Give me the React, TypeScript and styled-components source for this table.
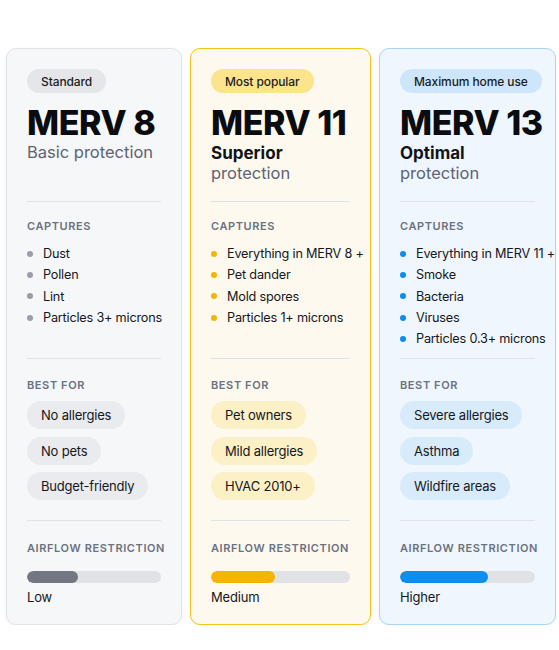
import * as React from "react";
import styled, { createGlobalStyle } from "styled-components";

type Tone = "gray" | "yellow" | "blue";

const palette: Record<
  Tone,
  { bg: string; border: string; badge: string; chip: string; dot: string; fill: string; borderWidth: string }
> = {
  gray: {
    bg: "#f6f7f9",
    border: "#e1e3e8",
    badge: "#e5e6ea",
    chip: "#eaebee",
    dot: "#9a9ea8",
    fill: "#737782",
    borderWidth: "1px",
  },
  yellow: {
    bg: "#fdf9ef",
    border: "#f5c21c",
    badge: "#fce48c",
    chip: "#fcf0c6",
    dot: "#f4b400",
    fill: "#f4b400",
    borderWidth: "1.5px",
  },
  blue: {
    bg: "#eff6fd",
    border: "#a9d5f8",
    badge: "#cde6fb",
    chip: "#d8ebfb",
    dot: "#0b8ef0",
    fill: "#0a8ff0",
    borderWidth: "1.5px",
  },
};

const GlobalStyle = createGlobalStyle`
  body {
    margin: 0;
    background: #ffffff;
    font-family: Inter, "Noto Sans", sans-serif;
    color: #111318;
  }
`;

const Grid = styled.div`
  display: grid;
  grid-template-columns: 176px 181px 177px;
  column-gap: 8px;
  padding: 48px 0 0 6px;
`;

const Card = styled.div<{ $tone: Tone }>`
  display: grid;
  grid-row: span 4;
  grid-template-rows: subgrid;
  grid-template-columns: minmax(0, 1fr);
  row-gap: 0;
  min-width: 0;
  background: ${(p) => palette[p.$tone].bg};
  border: ${(p) => palette[p.$tone].borderWidth} solid ${(p) => palette[p.$tone].border};
  border-radius: 10px;
  box-shadow: 0 1px 4px rgba(20, 30, 50, 0.05);
`;

const Header = styled.div`
  padding: 20px 20px 18px;
  display: flex;
  flex-direction: column;
  align-items: flex-start;
`;

const Badge = styled.span<{ $tone: Tone }>`
  display: inline-flex;
  align-items: center;
  height: 24px;
  padding: 0 14px;
  border-radius: 12px;
  background: ${(p) => palette[p.$tone].badge};
  font-size: 12px;
  font-weight: 500;
  letter-spacing: -0.1px;
  color: #1b1d22;
  white-space: nowrap;
`;

const Title = styled.h2`
  margin: 11px 0 0;
  font-size: 34px;
  line-height: 38px;
  font-weight: 800;
  letter-spacing: -0.4px;
  white-space: nowrap;
  color: #0b0c0f;
`;

const Strong = styled.div`
  font-size: 17px;
  line-height: 20px;
  font-weight: 700;
  color: #111318;
  margin-top: 1px;
`;

const Sub = styled.div`
  font-size: 16.5px;
  line-height: 20px;
  font-weight: 400;
  color: #5d6474;
  white-space: nowrap;
`;

const Section = styled.section<{ $top: number; $bottom: number }>`
  min-width: 0;
  margin: 0 20px;
  border-top: 1px solid #dfe2e8;
  padding: ${(p) => p.$top}px 0 ${(p) => p.$bottom}px;
  display: flex;
  flex-direction: column;
  align-items: flex-start;
`;

const Label = styled.div`
  font-size: 11px;
  line-height: 14px;
  font-weight: 600;
  letter-spacing: 0.055em;
  text-transform: uppercase;
  white-space: nowrap;
  color: #6b7280;
`;

const List = styled.ul`
  list-style: none;
  margin: 10px 0 0;
  padding: 0;
`;

const Item = styled.li<{ $tone: Tone }>`
  display: flex;
  align-items: center;
  gap: 10px;
  font-size: 12.7px;
  line-height: 21.3px;
  letter-spacing: -0.2px;
  color: #15171c;
  white-space: nowrap;

  &::before {
    content: "";
    width: 6px;
    height: 6px;
    border-radius: 50%;
    flex: none;
    background: ${(p) => palette[p.$tone].dot};
  }
`;

const Chips = styled.div`
  display: flex;
  flex-direction: column;
  align-items: flex-start;
  gap: 7.5px;
  margin-top: 9px;
`;

const Chip = styled.span<{ $tone: Tone }>`
  display: inline-flex;
  align-items: center;
  height: 28px;
  padding: 0 14px;
  border-radius: 14px;
  background: ${(p) => palette[p.$tone].chip};
  font-size: 13px;
  letter-spacing: -0.2px;
  color: #15171c;
  white-space: nowrap;
`;

const Track = styled.div`
  align-self: stretch;
  height: 12px;
  margin-top: 16px;
  border-radius: 6px;
  background: #e1e2e6;
  overflow: hidden;
`;

const Fill = styled.div<{ $tone: Tone }>`
  height: 100%;
  border-radius: 6px;
  background: ${(p) => palette[p.$tone].fill};
`;

const Level = styled.div`
  margin-top: 5px;
  font-size: 13px;
  line-height: 18px;
  letter-spacing: -0.15px;
  color: #15171c;
`;

type Plan = {
  tone: Tone;
  badge: string;
  title: string;
  strong?: string;
  sub: string;
  captures: string[];
  bestFor: string[];
  airflow: number;
  level: string;
};

const plans: Plan[] = [
  {
    tone: "gray",
    badge: "Standard",
    title: "MERV 8",
    sub: "Basic protection",
    captures: ["Dust", "Pollen", "Lint", "Particles 3+ microns"],
    bestFor: ["No allergies", "No pets", "Budget-friendly"],
    airflow: 38,
    level: "Low",
  },
  {
    tone: "yellow",
    badge: "Most popular",
    title: "MERV 11",
    strong: "Superior",
    sub: "protection",
    captures: ["Everything in MERV 8 +", "Pet dander", "Mold spores", "Particles 1+ microns"],
    bestFor: ["Pet owners", "Mild allergies", "HVAC 2010+"],
    airflow: 46,
    level: "Medium",
  },
  {
    tone: "blue",
    badge: "Maximum home use",
    title: "MERV 13",
    strong: "Optimal",
    sub: "protection",
    captures: ["Everything in MERV 11 +", "Smoke", "Bacteria", "Viruses", "Particles 0.3+ microns"],
    bestFor: ["Severe allergies", "Asthma", "Wildfire areas"],
    airflow: 65,
    level: "Higher",
  },
];

const App = () => {
  return (
    <>
      <GlobalStyle />
      <Grid>
        {plans.map((plan) => (
          <Card key={plan.title} $tone={plan.tone}>
            <Header>
              <Badge $tone={plan.tone}>{plan.badge}</Badge>
              <Title>{plan.title}</Title>
              {plan.strong && <Strong>{plan.strong}</Strong>}
              <Sub>{plan.sub}</Sub>
            </Header>
            <Section $top={17} $bottom={9}>
              <Label>Captures</Label>
              <List>
                {plan.captures.map((c) => (
                  <Item key={c} $tone={plan.tone}>
                    {c}
                  </Item>
                ))}
              </List>
            </Section>
            <Section $top={19} $bottom={20}>
              <Label>Best for</Label>
              <Chips>
                {plan.bestFor.map((b) => (
                  <Chip key={b} $tone={plan.tone}>
                    {b}
                  </Chip>
                ))}
              </Chips>
            </Section>
            <Section $top={20} $bottom={18}>
              <Label>Airflow restriction</Label>
              <Track>
                <Fill $tone={plan.tone} style={{ width: `${plan.airflow}%` }} />
              </Track>
              <Level>{plan.level}</Level>
            </Section>
          </Card>
        ))}
      </Grid>
    </>
  );
};

export default App;
